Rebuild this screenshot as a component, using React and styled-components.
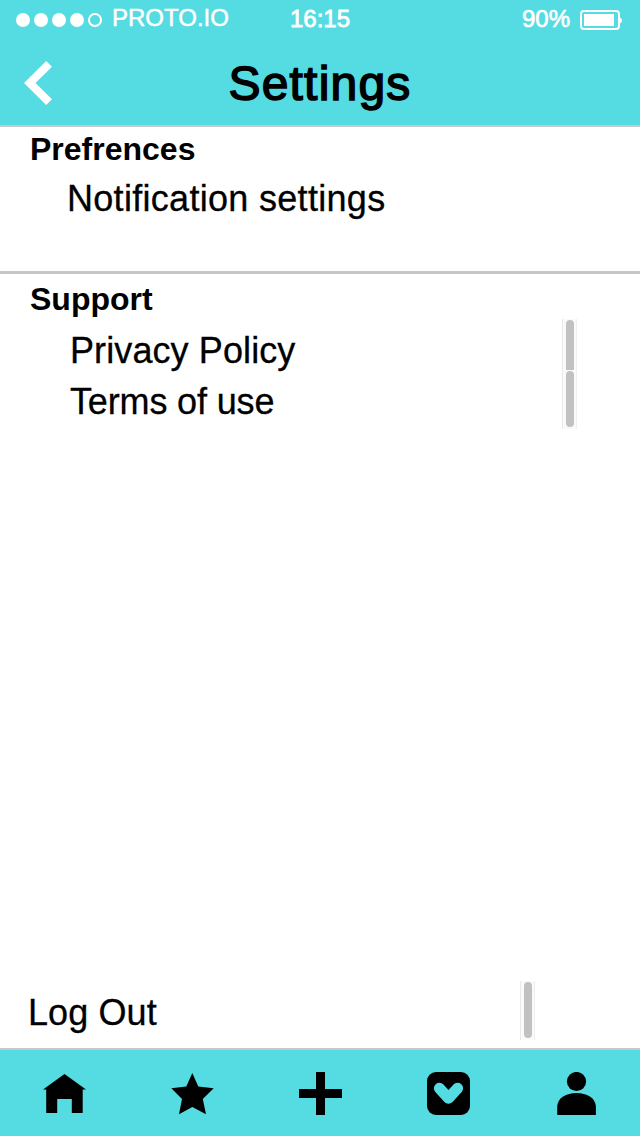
import React from "react";
import styled, { createGlobalStyle } from "styled-components";

const Global = createGlobalStyle`
  * { box-sizing: border-box; }
  body { margin: 0; background: #fff; }
`;

const Screen = styled.div`
  width: 640px;
  height: 1136px;
  display: flex;
  flex-direction: column;
  overflow: hidden;
  background: #fff;
  color: #000;
  font-family: "Liberation Sans", Arial, sans-serif;
`;

const Header = styled.header`
  height: 127px;
  flex: none;
  background: #55dbe2;
  border-bottom: 2px solid #c8c7cc;
`;

const StatusBar = styled.div`
  height: 40px;
  display: grid;
  grid-template-columns: 290px 1fr 118px;
  color: #fff;
`;

const Carrier = styled.div`
  display: flex;
  align-items: flex-start;
  padding-left: 16px;
`;

const Signal = styled.div`
  display: flex;
  gap: 4px;
  padding-top: 13px;
  margin-right: 10px;
`;

const Dot = styled.span`
  width: 14px;
  height: 14px;
  border-radius: 50%;
  border: 2px solid #fff;
  background: ${(p) => (p.$filled ? "#fff" : "transparent")};
`;

const StatusText = styled.span`
  font-size: 24px;
  line-height: 36px;
  white-space: nowrap;
  padding-top: ${(p) => p.$top || 0}px;
  letter-spacing: ${(p) => p.$spacing || 0}px;
  -webkit-text-stroke: ${(p) => p.$stroke || 0.5}px #fff;
`;

const Power = styled.div`
  display: flex;
  align-items: flex-start;
  gap: 10px;
`;

const Battery = styled.svg`
  display: block;
  margin-top: 10px;
`;

const TitleBar = styled.div`
  height: 85px;
  display: grid;
  grid-template-columns: 226px 188px 226px;
`;

const BackButton = styled.button`
  display: flex;
  align-items: flex-start;
  width: 60px;
  height: 85px;
  padding: 21px 0 0 24px;
  border: 0;
  background: none;
`;

const Title = styled.h1`
  margin: 0;
  text-align: center;
  font-weight: 400;
  font-size: 48px;
  line-height: 88px;
  letter-spacing: 1.2px;
  white-space: nowrap;
  -webkit-text-stroke: 1.5px #000;
`;

const Content = styled.main`
  flex: 1;
  display: flex;
  flex-direction: column;
`;

const Section = styled.section`
  padding-top: ${(p) => p.$top}px;
  height: ${(p) => p.$height || "auto"};
  border-bottom: ${(p) => (p.$divided ? "3px solid #c6c6c6" : "0")};
`;

const SectionTitle = styled.h2`
  margin: 0;
  padding-left: 30px;
  font-size: 32px;
  font-weight: 700;
  line-height: 40px;
`;

const Row = styled.div`
  display: flex;
  justify-content: space-between;
  width: ${(p) => p.$width}px;
  height: ${(p) => p.$height}px;
  padding-left: ${(p) => p.$left}px;
`;

const Label = styled.span`
  font-size: 36px;
  line-height: 50px;
  padding-top: ${(p) => p.$top}px;
  letter-spacing: ${(p) => p.$spacing || 0}px;
  white-space: nowrap;
  font-variant-ligatures: none;
  -webkit-text-stroke: 0.3px #000;
`;

const ScrollTrack = styled.span`
  width: 15px;
  display: flex;
  padding: 1px 2px ${(p) => (p.$clipped ? 0 : 2)}px 3px;
  background: #fafafa;
  border-left: 1px solid #e9e9e9;
  border-right: 1px solid #efefef;
`;

const ScrollThumb = styled.span`
  flex: 1;
  background: #c1c1c1;
  border-radius: ${(p) => (p.$clipped ? "4px 4px 0 0" : "4px")};
`;

const Footer = styled.div`
  margin-top: auto;
  padding-bottom: 8px;
`;

const TabBar = styled.nav`
  height: 88px;
  flex: none;
  display: grid;
  grid-template-columns: repeat(5, 1fr);
  border-top: 2px solid #c8c7cc;
  background: #55dbe2;
`;

const Tab = styled.button`
  display: flex;
  justify-content: center;
  padding: 22px 0 0;
  border: 0;
  background: none;
  color: #000;
`;

const Icon = ({ children }) => (
  <svg width="44" height="44" viewBox="0 0 44 44" fill="currentColor">
    {children}
  </svg>
);

const tabs = [
  {
    name: "Home",
    icon: <path d="M22.500 2 44 17.500H40.700V41H29.800V27H15.200V41H4.200V17.500H1Z" />,
  },
  {
    name: "Favorites",
    icon: (
      <path d="M22.300 1 28.300 14.500 43.700 16.200 32.800 27 36 42.200 22.300 35 9 42.200 12 27 1.300 16.200 16.300 14.500Z" />
    ),
  },
  {
    name: "Add",
    icon: <path d="M18 0H27V17H44V26H27V43H18V26H1V17H18Z" />,
  },
  {
    name: "Likes",
    icon: (
      <>
        <rect x="1" y="0" width="43" height="43" rx="9" />
        <path
          d="M13.400 16.200 22.500 26.200 31.600 16.200"
          fill="none"
          stroke="#55dbe2"
          strokeWidth="11"
          strokeLinecap="round"
          strokeLinejoin="round"
        />
      </>
    ),
  },
  {
    name: "Profile",
    icon: (
      <>
        <circle cx="22.500" cy="9.500" r="9.600" />
        <path d="M3.200 43V34C4 26 12 21 22.500 21S41 26 41.900 34V43Z" />
      </>
    ),
  },
];

export default function App() {
  return (
    <Screen>
      <Global />
      <Header>
        <StatusBar>
          <Carrier>
            <Signal>
              {[true, true, true, true, false].map((filled, i) => (
                <Dot key={i} $filled={filled} />
              ))}
            </Signal>
            <StatusText>PROTO.IO</StatusText>
          </Carrier>
          <StatusText $top={1} $stroke={0.8}>16:15</StatusText>
          <Power>
            <StatusText $top={1} $stroke={0.7}>90%</StatusText>
            <Battery width="42" height="20" viewBox="0 0 42 20">
              <rect x="1" y="1" width="38" height="18" rx="3" fill="none" stroke="#fff" strokeWidth="2" />
              <rect x="4" y="4" width="30" height="12" fill="#fff" />
              <path d="M40 7.500Q42 8.500 42 10.500T40 13.500Z" fill="#fff" />
            </Battery>
          </Power>
        </StatusBar>
        <TitleBar>
          <BackButton aria-label="Back">
            <svg width="28" height="44" viewBox="0 0 28 44">
              <path d="M22.200 0 28 5.800 11.500 22 28 38.200 22.200 44 0 22Z" fill="#fff" />
            </svg>
          </BackButton>
          <Title>Settings</Title>
        </TitleBar>
      </Header>
      <Content>
        <Section $top={2} $height="147px" $divided>
          <SectionTitle>Prefrences</SectionTitle>
          <Row $left={67} $width={640} $height={60}>
            <Label $top={5} $spacing={0.3}>Notification settings</Label>
          </Row>
        </Section>
        <Section $top={5}>
          <SectionTitle>Support</SectionTitle>
          <Row $left={70} $width={577} $height={51}>
            <Label $top={7} $spacing={0.1}>Privacy Policy</Label>
            <ScrollTrack $clipped>
              <ScrollThumb $clipped />
            </ScrollTrack>
          </Row>
          <Row $left={70} $width={577} $height={59}>
            <Label $top={7} $spacing={-0.15}>Terms of use</Label>
            <ScrollTrack>
              <ScrollThumb />
            </ScrollTrack>
          </Row>
        </Section>
        <Footer>
          <Row $left={28} $width={535} $height={59}>
            <Label $top={7} $spacing={0.1}>Log Out</Label>
            <ScrollTrack>
              <ScrollThumb />
            </ScrollTrack>
          </Row>
        </Footer>
      </Content>
      <TabBar>
        {tabs.map((tab) => (
          <Tab key={tab.name} aria-label={tab.name}>
            <Icon>{tab.icon}</Icon>
          </Tab>
        ))}
      </TabBar>
    </Screen>
  );
}
